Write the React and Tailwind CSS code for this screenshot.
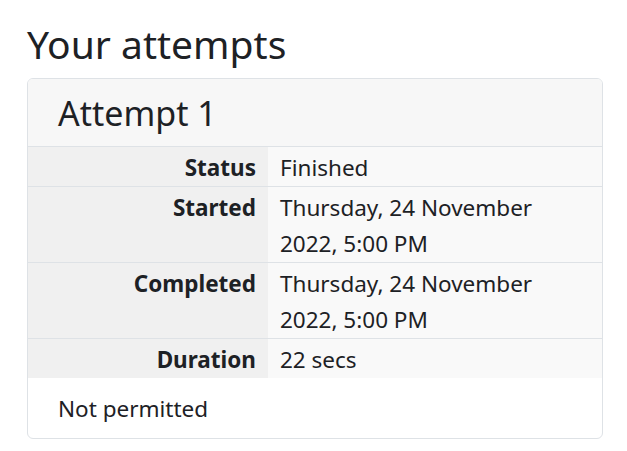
import React from 'react';

const rows = [
  { label: 'Status', value: 'Finished' },
  { label: 'Started', value: 'Thursday, 24 November 2022, 5:00 PM' },
  { label: 'Completed', value: 'Thursday, 24 November 2022, 5:00 PM' },
  { label: 'Duration', value: '22 secs' },
];

export default function App() {
  return (
    <div className="min-h-[451px] bg-white pl-[27px] pr-[24px] pt-[18px] text-[#1d2125] font-['Noto_Sans',sans-serif]">
      <h2 className="text-[39px] leading-[52px] mb-[8px]">Your attempts</h2>
      <div className="border border-[#dee2e6] rounded-[6px] overflow-hidden">
        <div className="bg-[#f7f7f7] pl-[30px] h-[68px] flex items-center border-b border-[#dee2e6]">
          <h3 className="text-[34px] leading-none">Attempt 1</h3>
        </div>
        <table className="w-full border-collapse text-[22.5px] leading-[36px]">
          <tbody>
            {rows.map((r, i) => (
              <tr key={r.label} className={i < rows.length - 1 ? 'border-b border-[#dee2e6]' : ''}>
                <th className="w-[240px] bg-[#f0f0f0] text-right font-bold align-top pr-[12px] pt-[3px] pb-0">
                  {r.label}
                </th>
                <td className="bg-[#f9f9f9] align-top pl-[12px] pr-[50px] pt-[3px] pb-0">{r.value}</td>
              </tr>
            ))}
          </tbody>
        </table>
        <div className="pl-[30px] pt-[13px] pb-[11px] text-[22.5px] leading-[36px]">Not permitted</div>
      </div>
    </div>
  );
}
